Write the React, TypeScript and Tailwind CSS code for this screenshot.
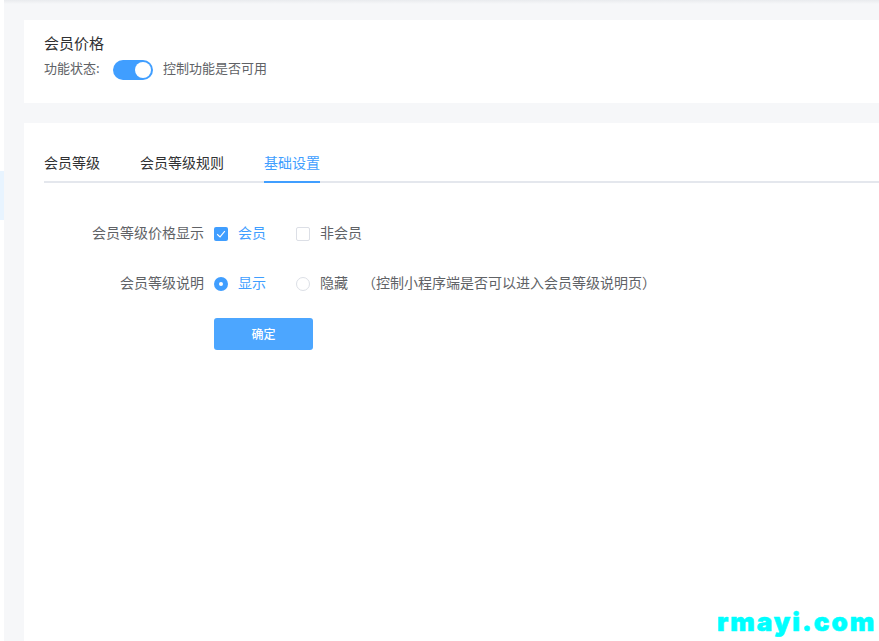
import React from "react";

const font = { fontFamily: '"Microsoft YaHei", "Noto Sans CJK SC", sans-serif' };

function Check() {
  return (
    <span className="flex h-[14px] w-[14px] items-center justify-center rounded-[2px] bg-[#409eff]">
      <svg width="12" height="12" viewBox="0 0 10 10" fill="none" stroke="#fff" strokeWidth="0.9">
        <path d="M1.8 5.2 L4.2 7.4 L8.2 2.6" />
      </svg>
    </span>
  );
}

function App() {
  return (
    <div className="relative flex h-[641px] w-[879px] overflow-hidden bg-[#f6f7f9]" style={font}>
      <div className="w-[4px] shrink-0 bg-white pt-[171px]">
        <div className="h-[49px] bg-[#e8f4ff]" />
      </div>
      <div className="flex min-w-0 flex-1 flex-col">
        <div className="h-[4px] shrink-0 bg-gradient-to-b from-[#e9ebee] to-[#f6f7f9]" />
        <div className="flex flex-1 flex-col gap-[20px] pl-[20px] pt-[16px]">
          <div className="h-[83px] bg-white pl-[20px] pt-[13px]">
            <div className="text-[15px] leading-[20px] text-[#303133]">会员价格</div>
            <div className="mt-[7px] flex h-[20px] items-center text-[13px] text-[#606266]">
              <span className="w-[69px] pb-[4px]">功能状态:</span>
              <span className="flex h-[20px] w-[40px] items-center justify-end rounded-full bg-[#409eff] pr-[2px]">
                <span className="h-[16px] w-[16px] rounded-full bg-white" />
              </span>
              <span className="ml-[10px] pb-[4px]">控制功能是否可用</span>
            </div>
          </div>
          <div className="flex-1 bg-white pl-[20px] pt-[29px]">
            <div className="flex h-[31px] border-b-2 border-[#e4e7ed] text-[14px] leading-[20px] text-[#303133]">
              <span className="mr-[40px] h-[31px]">会员等级</span>
              <span className="mr-[40px] h-[31px]">会员等级规则</span>
              <span className="h-[31px] border-b-2 border-[#409eff] text-[#409eff]">基础设置</span>
            </div>
            <div className="mt-[41px] flex h-[20px] items-center text-[14px] text-[#606266]">
              <span className="w-[170px] pb-[4px] pr-[10px] text-right">会员等级价格显示</span>
              <Check />
              <span className="ml-[10px] w-[58px] pb-[4px] text-[#409eff]">会员</span>
              <span className="h-[14px] w-[14px] rounded-[2px] border border-[#dcdfe6] bg-white" />
              <span className="ml-[10px] pb-[4px]">非会员</span>
            </div>
            <div className="mt-[30px] flex h-[20px] items-center text-[14px] text-[#606266]">
              <span className="w-[170px] pb-[4px] pr-[10px] text-right">会员等级说明</span>
              <span className="flex h-[14px] w-[14px] items-center justify-center rounded-full bg-[#409eff]">
                <span className="h-[4px] w-[4px] rounded-full bg-white" />
              </span>
              <span className="ml-[10px] w-[58px] pb-[4px] text-[#409eff]">显示</span>
              <span className="h-[14px] w-[14px] rounded-full border border-[#dcdfe6] bg-white" />
              <span className="ml-[10px] pb-[4px]">隐藏</span>
              <span className="ml-[14px] pb-[4px]">（控制小程序端是否可以进入会员等级说明页）</span>
            </div>
            <button className="ml-[170px] mt-[24px] flex h-[32px] w-[99px] items-center justify-center rounded-[3px] bg-[#4ca6ff] text-[12px] font-medium text-white">
              确定
            </button>
          </div>
        </div>
      </div>
      <div
        className="absolute left-[717px] top-[605px] whitespace-nowrap text-[26px] font-black leading-[34px] tracking-[2px] text-[#00ffff]"
        style={{ fontFamily: 'Inter, sans-serif', WebkitTextStroke: "0.6px #00ffff" }}
      >
        rmayi.com
      </div>
    </div>
  );
}

export default App;
